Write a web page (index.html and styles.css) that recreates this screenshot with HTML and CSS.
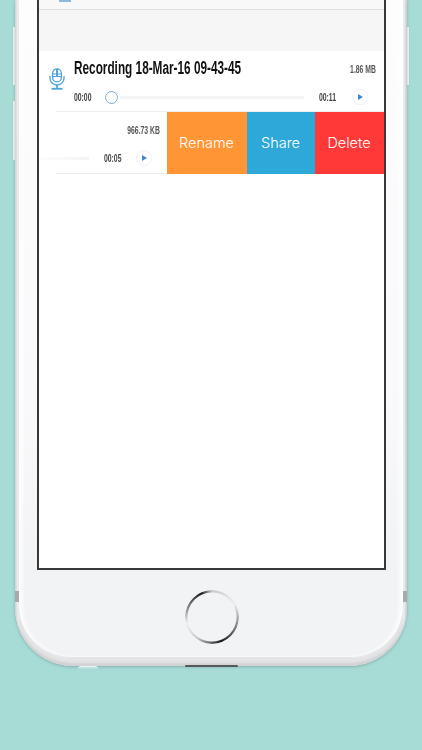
FILE: index.html
```html
<!DOCTYPE html>
<html lang="en">
<head>
<meta charset="utf-8">
<title>Voice recordings</title>
<link rel="stylesheet" href="styles.css">
</head>
<body>
<div class="stage">
  <div class="side-btn side-a"></div>
  <div class="side-btn side-b"></div>
  <div class="side-btn side-c"></div>
  <div class="phone">
    <div class="band band-l"></div>
    <div class="band band-r"></div>
    <div class="face">
      <div class="screen">
        <div class="top-row"><span class="top-icon"></span></div>
        <div class="gap-row"></div>
        <div class="rec-row">
          <svg class="mic" viewBox="0 0 16 22" width="16" height="22" fill="none" stroke="#4ea3dc" stroke-width="1.3">
            <rect x="3.6" y="0.8" width="8.8" height="13" rx="4.4"/>
            <path d="M3.6 6h8.8M3.6 8.5h8.8" stroke-width="1"/>
            <path d="M8 1v7" stroke-width="2"/>
            <path d="M1 8v2.5a7 6.5 0 0 0 14 0V8"/>
            <path d="M8 17v3" stroke-width="1.8"/>
            <path d="M2.5 20.8h11" stroke-width="1.8"/>
          </svg>
          <div class="rec-body">
            <div class="rec-head">
              <span class="title">Recording 18-Mar-16 09-43-45</span>
              <span class="size">1.86 MB</span>
            </div>
            <div class="player">
              <span class="time">00:00</span>
              <span class="knob"></span>
              <span class="track"></span>
              <span class="time">00:11</span>
              <span class="play"><i></i></span>
            </div>
          </div>
        </div>
        <div class="swipe-row">
          <div class="swiped">
            <div class="swiped-size"><span class="size">966.73 KB</span></div>
            <div class="swiped-player">
              <span class="track track-fade"></span>
              <span class="time">00:05</span>
              <span class="play"><i></i></span>
            </div>
          </div>
          <div class="action rename">Rename</div>
          <div class="action share">Share</div>
          <div class="action delete">Delete</div>
        </div>
      </div>
      <div class="home-area"><div class="home"></div></div>
    </div>
    <div class="nub"></div>
    <div class="notch"></div>
  </div>
</div>
</body>
</html>
```
FILE: styles.css
```css
* { box-sizing: border-box; }
html, body { margin: 0; padding: 0; }
body { width: 422px; height: 750px; overflow: hidden; background: #a7dbd6; font-family: "Liberation Sans", Arial, sans-serif; }
.stage { position: relative; width: 422px; height: 750px; padding: 0 15px; }
.phone { position: relative; width: 392px; height: 666px; padding: 0 4px 8px; background: linear-gradient(90deg, #d4d4d6, #eeeeef 3px, #e4e4e6 5px, #e4e4e6 387px, #eeeeef 389px, #c9c9cb); border-radius: 0 0 58px 58px; box-shadow: 0 1px 3px rgba(90,120,115,.45), inset 0 -3px 2px #d2d2d4; }
.face { height: 100%; padding: 0 18px; background: linear-gradient(180deg, #fdfdfe, #f9f9fb 400px, #f2f3f5 570px); border-radius: 0 0 52px 52px; box-shadow: inset 0 -1px 0 #e3e3e5, inset 3px 0 4px #fff, inset -3px 0 4px #fff; display: flex; flex-direction: column; }
.screen { height: 570px; margin: 0 -1px 0 0; background: #fff; border: solid #37383a; border-width: 0 2px 2px; flex: none; }
.top-row { height: 10px; background: #f8f8f8; border-bottom: 1px solid #dedede; padding-left: 20px; }
.top-icon { display: block; width: 12px; height: 2px; background: #8fb9dc; }
.gap-row { height: 41px; background: #f6f6f6; }
.rec-row { height: 61px; display: flex; align-items: flex-start; padding: 0 8px 0 10px; position: relative; }
.rec-row::after { content: ""; position: absolute; left: 17px; right: 0; bottom: 0; height: 1px; background: #ececec; }
.mic { flex: none; margin-top: 17px; }
.rec-body { flex: 1; min-width: 0; margin-left: 9px; padding-top: 7px; }
.rec-head { display: flex; justify-content: space-between; align-items: center; height: 20px; }
.title { display: block; width: 166px; font-weight: 700; font-size: 18px; line-height: 20px; color: #111; white-space: nowrap; transform: scaleX(.655); transform-origin: left center; }
.size { display: inline-block; font-weight: 700; font-size: 10px; color: #555; white-space: nowrap; margin-top: 3px; transform: scaleX(.68); transform-origin: right center; }
.player { display: flex; align-items: center; height: 18px; margin-top: 10px; }
.time { font-weight: 700; font-size: 10.5px; color: #444; flex: none; width: 18px; white-space: nowrap; transform: scaleX(.65); transform-origin: left center; }
.knob { flex: none; width: 13px; height: 13px; margin-left: 13px; border: 1px solid #7faad3; border-radius: 50%; background: #fff; }
.track { flex: 1; height: 3px; margin: 0 15px 0 2px; background: #f5f5f5; }
.play { flex: none; width: 16px; height: 16px; margin: 0 8px 0 15px; border: 1px solid #edf1f6; border-radius: 50%; display: flex; align-items: center; justify-content: center; }
.play i { display: block; margin-left: 1px; border-style: solid; border-width: 3.5px 0 3.5px 5px; border-color: transparent transparent transparent #3f86d0; }
.swipe-row { display: flex; height: 62px; }
.swiped { width: 127.5px; flex: none; position: relative; display: flex; flex-direction: column; }
.swiped::after { content: ""; position: absolute; left: 17px; right: 0; bottom: 0; height: 1px; background: #ececec; }
.swiped-size { text-align: right; padding: 9px 7px 0 0; line-height: 14px; height: 26px; }
.swiped-player { display: flex; align-items: center; height: 18px; margin-top: 11px; }
.track-fade { margin: 0 15px 0 0; background: linear-gradient(90deg, #fcfcfc, #f4f4f4); }
.swiped-player .play { margin: 0 15px 0 14px; }
.action { display: flex; align-items: center; justify-content: center; padding-bottom: 1px; color: #fff; font-family: Inter, "Liberation Sans", sans-serif; font-weight: 300; font-size: 14.5px; flex: none; }
.rename { width: 80px; background: #ff9535; }
.share { width: 68px; background: #2ea8d8; }
.delete { width: 69px; background: #ff3838; }
.home-area { flex: 1; display: flex; justify-content: center; padding: 20px 0 0 2px; }
.home { width: 54px; height: 54px; border-radius: 50%; background: conic-gradient(from 0deg, #c8c8ca 0deg, #eee 60deg, #8e8e90 105deg, #1e1e20 160deg, #c9c9cb 215deg, #f2f2f2 255deg, #8a8a8c 290deg, #1e1e20 335deg, #c8c8ca 360deg); -webkit-mask: radial-gradient(circle, transparent 24px, #000 25px); mask: radial-gradient(circle, transparent 24px, #000 25px); }
.band { position: absolute; top: 591px; width: 4px; height: 11px; background: #a9a9ab; }
.band-l { left: 0; }
.band-r { right: 0; }
.notch { position: absolute; left: 170px; bottom: -1px; width: 53px; height: 2px; background: #57585a; border-radius: 1px; }
.nub { position: absolute; left: 63px; bottom: -3px; width: 20px; height: 3px; background: #b9e2dd; border-top: 1px solid #eef3f3; border-radius: 10px 10px 0 0; }
.side-btn { position: absolute; width: 2px; background: #f4f6f6; box-shadow: 0 0 1px #8fa8a6; }
.side-a { left: 13px; top: 27px; height: 58px; }
.side-b { left: 13px; top: 101px; height: 59px; }
.side-c { left: 407px; top: 27px; height: 58px; }
```
